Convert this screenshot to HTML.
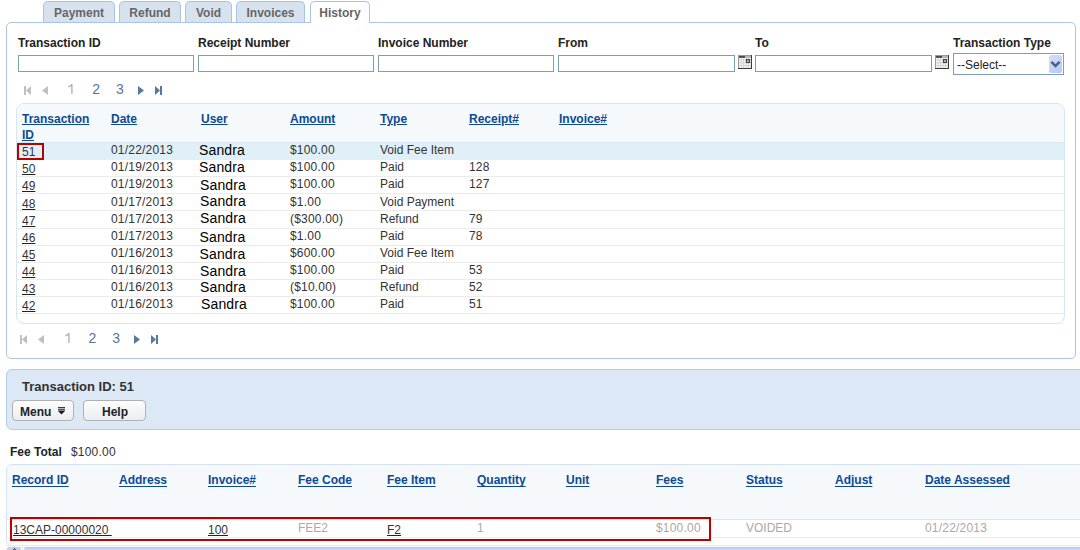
<!DOCTYPE html>
<html><head><meta charset="utf-8"><style>
html,body{margin:0;padding:0;background:#fff;width:1080px;height:550px;overflow:hidden;position:relative;font-family:"Liberation Sans", sans-serif;}
.t{position:absolute;white-space:nowrap;font-family:"Liberation Sans", sans-serif;}
.b{position:absolute;}
svg.b{position:absolute;}
</style></head><body>
<div class="b" style="left:43px;top:1px;width:72px;height:21px;background:#d7e2ef;border:1px solid #a8c4e4;border-bottom:none;border-radius:5px 5px 0 0;box-sizing:border-box;"></div>
<div class="b" style="left:119px;top:1px;width:62px;height:21px;background:#d7e2ef;border:1px solid #a8c4e4;border-bottom:none;border-radius:5px 5px 0 0;box-sizing:border-box;"></div>
<div class="b" style="left:185px;top:1px;width:47px;height:21px;background:#d7e2ef;border:1px solid #a8c4e4;border-bottom:none;border-radius:5px 5px 0 0;box-sizing:border-box;"></div>
<div class="b" style="left:236px;top:1px;width:69px;height:21px;background:#d7e2ef;border:1px solid #a8c4e4;border-bottom:none;border-radius:5px 5px 0 0;box-sizing:border-box;"></div>
<div class="b" style="left:310px;top:1px;width:60px;height:22px;background:#fff;border:1px solid #a8c4e4;border-bottom:none;border-radius:5px 5px 0 0;box-sizing:border-box;"></div>
<div class="b" style="left:6px;top:22px;width:1070px;height:337px;border:1px solid #a9c6e8;border-radius:5px;box-sizing:border-box;background:transparent;"></div>
<div class="b" style="left:311px;top:22px;width:58px;height:1px;background:#fff;"></div>
<div class="t" style="left:43px;top:6px;width:72px;text-align:center;font-size:12px;line-height:14px;font-weight:bold;color:#666;">Payment</div>
<div class="t" style="left:119px;top:6px;width:62px;text-align:center;font-size:12px;line-height:14px;font-weight:bold;color:#666;">Refund</div>
<div class="t" style="left:185px;top:6px;width:47px;text-align:center;font-size:12px;line-height:14px;font-weight:bold;color:#666;">Void</div>
<div class="t" style="left:236px;top:6px;width:69px;text-align:center;font-size:12px;line-height:14px;font-weight:bold;color:#666;">Invoices</div>
<div class="t" style="left:310px;top:6px;width:60px;text-align:center;font-size:12px;line-height:14px;font-weight:bold;color:#666;">History</div>
<div class="t" style="left:18px;top:36px;font-size:12px;line-height:14px;font-weight:bold;color:#222;">Transaction ID</div>
<div class="t" style="left:198px;top:36px;font-size:12px;line-height:14px;font-weight:bold;color:#222;">Receipt Number</div>
<div class="t" style="left:378px;top:36px;font-size:12px;line-height:14px;font-weight:bold;color:#222;">Invoice Number</div>
<div class="t" style="left:558px;top:36px;font-size:12px;line-height:14px;font-weight:bold;color:#222;">From</div>
<div class="t" style="left:755px;top:36px;font-size:12px;line-height:14px;font-weight:bold;color:#222;">To</div>
<div class="t" style="left:953px;top:36px;font-size:12px;line-height:14px;font-weight:bold;color:#222;">Transaction Type</div>
<div class="b" style="left:18px;top:55px;width:176px;height:17px;border:1px solid #7f9db9;box-sizing:border-box;background:#fff;"></div>
<div class="b" style="left:198px;top:55px;width:176px;height:17px;border:1px solid #7f9db9;box-sizing:border-box;background:#fff;"></div>
<div class="b" style="left:378px;top:55px;width:176px;height:17px;border:1px solid #7f9db9;box-sizing:border-box;background:#fff;"></div>
<div class="b" style="left:558px;top:55px;width:177px;height:17px;border:1px solid #7f9db9;box-sizing:border-box;background:#fff;"></div>
<div class="b" style="left:755px;top:55px;width:177px;height:17px;border:1px solid #7f9db9;box-sizing:border-box;background:#fff;"></div>
<div class="b" style="left:738px;top:55px;width:14px;height:14px;"><svg width="14" height="14" viewBox="0 0 14 14">
<rect x="0" y="0" width="14" height="14" fill="#9a9a9a"/>
<rect x="1" y="1" width="12" height="2" fill="#b4b4b4"/>
<rect x="1" y="1" width="6" height="2" fill="#4a4a4a"/>
<rect x="1" y="3" width="12" height="10" fill="#d2d2d2"/>
<g fill="#fbfbfb"><rect x="1.10" y="2.85" width="1.6" height="1.6"/><rect x="1.10" y="5.60" width="1.6" height="1.6"/><rect x="1.10" y="8.35" width="1.6" height="1.6"/><rect x="1.10" y="11.10" width="1.6" height="1.6"/><rect x="3.57" y="2.85" width="1.6" height="1.6"/><rect x="3.57" y="5.60" width="1.6" height="1.6"/><rect x="3.57" y="8.35" width="1.6" height="1.6"/><rect x="3.57" y="11.10" width="1.6" height="1.6"/><rect x="6.04" y="2.85" width="1.6" height="1.6"/><rect x="6.04" y="5.60" width="1.6" height="1.6"/><rect x="6.04" y="8.35" width="1.6" height="1.6"/><rect x="6.04" y="11.10" width="1.6" height="1.6"/><rect x="8.51" y="2.85" width="1.6" height="1.6"/><rect x="8.51" y="5.60" width="1.6" height="1.6"/><rect x="8.51" y="8.35" width="1.6" height="1.6"/><rect x="8.51" y="11.10" width="1.6" height="1.6"/><rect x="10.98" y="2.85" width="1.6" height="1.6"/><rect x="10.98" y="5.60" width="1.6" height="1.6"/><rect x="10.98" y="8.35" width="1.6" height="1.6"/><rect x="10.98" y="11.10" width="1.6" height="1.6"/></g>
<rect x="8.6" y="4.6" width="2.8" height="2.8" fill="#fff" stroke="#444" stroke-width="1.3"/>
<rect x="13" y="0" width="1" height="14" fill="#3c3c3c"/><rect x="0" y="13" width="14" height="1" fill="#3c3c3c"/>
</svg></div>
<div class="b" style="left:935px;top:55px;width:14px;height:14px;"><svg width="14" height="14" viewBox="0 0 14 14">
<rect x="0" y="0" width="14" height="14" fill="#9a9a9a"/>
<rect x="1" y="1" width="12" height="2" fill="#b4b4b4"/>
<rect x="1" y="1" width="6" height="2" fill="#4a4a4a"/>
<rect x="1" y="3" width="12" height="10" fill="#d2d2d2"/>
<g fill="#fbfbfb"><rect x="1.10" y="2.85" width="1.6" height="1.6"/><rect x="1.10" y="5.60" width="1.6" height="1.6"/><rect x="1.10" y="8.35" width="1.6" height="1.6"/><rect x="1.10" y="11.10" width="1.6" height="1.6"/><rect x="3.57" y="2.85" width="1.6" height="1.6"/><rect x="3.57" y="5.60" width="1.6" height="1.6"/><rect x="3.57" y="8.35" width="1.6" height="1.6"/><rect x="3.57" y="11.10" width="1.6" height="1.6"/><rect x="6.04" y="2.85" width="1.6" height="1.6"/><rect x="6.04" y="5.60" width="1.6" height="1.6"/><rect x="6.04" y="8.35" width="1.6" height="1.6"/><rect x="6.04" y="11.10" width="1.6" height="1.6"/><rect x="8.51" y="2.85" width="1.6" height="1.6"/><rect x="8.51" y="5.60" width="1.6" height="1.6"/><rect x="8.51" y="8.35" width="1.6" height="1.6"/><rect x="8.51" y="11.10" width="1.6" height="1.6"/><rect x="10.98" y="2.85" width="1.6" height="1.6"/><rect x="10.98" y="5.60" width="1.6" height="1.6"/><rect x="10.98" y="8.35" width="1.6" height="1.6"/><rect x="10.98" y="11.10" width="1.6" height="1.6"/></g>
<rect x="8.6" y="4.6" width="2.8" height="2.8" fill="#fff" stroke="#444" stroke-width="1.3"/>
<rect x="13" y="0" width="1" height="14" fill="#3c3c3c"/><rect x="0" y="13" width="14" height="1" fill="#3c3c3c"/>
</svg></div>
<div class="b" style="left:953px;top:53px;width:111px;height:22px;border:1px solid #7f9db9;box-sizing:border-box;background:#fff;"></div>
<div class="t" style="left:957px;top:58px;font-size:12px;line-height:14px;color:#222;">--Select--</div>
<div class="b" style="left:1049px;top:55px;width:13px;height:18px;border-radius:2px;background:linear-gradient(135deg,#d3dffc,#b4c8f7);">
<svg width="13" height="18" viewBox="0 0 13 18"><path d="M2.4 6.9 L6.5 11 L10.6 6.9" fill="none" stroke="#4d6185" stroke-width="2.6"/></svg></div>
<svg class="b" style="left:24px;top:86px" width="150" height="10" viewBox="0 0 150 10">
<rect x="0" y="0" width="2" height="9" fill="#c0c0c0"/><path d="M2 4.5 L7 0 L7 9 Z" fill="#c0c0c0"/>
<path d="M18 4.5 L24 0 L24 9 Z" fill="#c0c0c0"/>
<path d="M114 0 L120 4.5 L114 9 Z" fill="#5878a0"/>
<path d="M131 0 L136 4.5 L131 9 Z" fill="#5878a0"/><rect x="136" y="0" width="2" height="9" fill="#5878a0"/>
</svg>
<svg class="b" style="left:68.3px;top:84px" width="6" height="10" viewBox="0 0 6 10"><path d="M3.2 0 L4.6 0 L4.6 10 L3.2 10 L3.2 2.2 Q2 3.2 0.2 3.6 L0.2 2.3 Q2.2 1.5 3.2 0 Z" fill="#b4b4b4"/></svg>
<div class="t" style="left:92.2px;top:81px;font-size:14px;line-height:16px;color:#5676a2;">2</div>
<div class="t" style="left:116px;top:81px;font-size:14px;line-height:16px;color:#5676a2;">3</div>
<div class="b" style="left:16px;top:103px;width:1049px;height:221px;border:1px solid #d6e6f3;border-radius:8px;box-sizing:border-box;background:#fff;overflow:hidden;"></div>
<div class="b" style="left:17px;top:104px;width:1047px;height:38px;background:#f5f9fc;border-radius:7px 7px 0 0;"></div>
<div class="b" style="left:17px;top:142px;width:1047px;height:1px;background:#dbe7f3;"></div>
<div class="b" style="left:17px;top:143px;width:1047px;height:16px;background:#e0f0f9;"></div>
<div class="b" style="left:17px;top:159px;width:1047px;height:1px;background:#ececec;"></div>
<div class="b" style="left:17px;top:176px;width:1047px;height:1px;background:#ececec;"></div>
<div class="b" style="left:17px;top:193px;width:1047px;height:1px;background:#ececec;"></div>
<div class="b" style="left:17px;top:210px;width:1047px;height:1px;background:#ececec;"></div>
<div class="b" style="left:17px;top:228px;width:1047px;height:1px;background:#ececec;"></div>
<div class="b" style="left:17px;top:245px;width:1047px;height:1px;background:#ececec;"></div>
<div class="b" style="left:17px;top:262px;width:1047px;height:1px;background:#ececec;"></div>
<div class="b" style="left:17px;top:279px;width:1047px;height:1px;background:#ececec;"></div>
<div class="b" style="left:17px;top:296px;width:1047px;height:1px;background:#ececec;"></div>
<div class="b" style="left:17px;top:313px;width:1047px;height:1px;background:#ececec;"></div>
<div class="t" style="left:22px;top:112px;font-size:12px;line-height:14px;font-weight:bold;color:#0c4a96;text-decoration:underline;">Transaction</div>
<div class="t" style="left:22px;top:128px;font-size:12px;line-height:14px;font-weight:bold;color:#0c4a96;text-decoration:underline;">ID</div>
<div class="t" style="left:111px;top:112px;font-size:12px;line-height:14px;font-weight:bold;color:#0c4a96;text-decoration:underline;">Date</div>
<div class="t" style="left:201px;top:112px;font-size:12px;line-height:14px;font-weight:bold;color:#0c4a96;text-decoration:underline;">User</div>
<div class="t" style="left:290px;top:112px;font-size:12px;line-height:14px;font-weight:bold;color:#0c4a96;text-decoration:underline;">Amount</div>
<div class="t" style="left:380px;top:112px;font-size:12px;line-height:14px;font-weight:bold;color:#0c4a96;text-decoration:underline;">Type</div>
<div class="t" style="left:469px;top:112px;font-size:12px;line-height:14px;font-weight:bold;color:#0c4a96;text-decoration:underline;">Receipt#</div>
<div class="t" style="left:559px;top:112px;font-size:12px;line-height:14px;font-weight:bold;color:#0c4a96;text-decoration:underline;">Invoice#</div>
<div class="t" style="left:22px;top:145px;font-size:12px;line-height:14px;color:#333;">51</div>
<div class="t" style="left:111px;top:143px;font-size:12px;line-height:14px;color:#333;letter-spacing:0.2px;">01/22/2013</div>
<div class="t" style="left:199px;top:142px;font-size:14px;line-height:16px;color:#000;letter-spacing:0.15px;">Sandra</div>
<div class="t" style="left:290px;top:143px;font-size:12px;line-height:14px;color:#333;letter-spacing:0.2px;">$100.00</div>
<div class="t" style="left:380px;top:143px;font-size:12px;line-height:14px;color:#333;">Void Fee Item</div>
<div class="t" style="left:22px;top:162px;font-size:12px;line-height:14px;color:#333;text-decoration:underline;text-decoration-color:#222;">50</div>
<div class="t" style="left:111px;top:160px;font-size:12px;line-height:14px;color:#333;letter-spacing:0.2px;">01/19/2013</div>
<div class="t" style="left:199px;top:159px;font-size:14px;line-height:16px;color:#000;letter-spacing:0.15px;">Sandra</div>
<div class="t" style="left:290px;top:160px;font-size:12px;line-height:14px;color:#333;letter-spacing:0.2px;">$100.00</div>
<div class="t" style="left:380px;top:160px;font-size:12px;line-height:14px;color:#333;">Paid</div>
<div class="t" style="left:469px;top:160px;font-size:12px;line-height:14px;color:#333;letter-spacing:0.2px;">128</div>
<div class="t" style="left:22px;top:179px;font-size:12px;line-height:14px;color:#333;text-decoration:underline;text-decoration-color:#222;">49</div>
<div class="t" style="left:111px;top:177px;font-size:12px;line-height:14px;color:#333;letter-spacing:0.2px;">01/19/2013</div>
<div class="t" style="left:200px;top:177px;font-size:14px;line-height:16px;color:#000;letter-spacing:0.15px;">Sandra</div>
<div class="t" style="left:290px;top:177px;font-size:12px;line-height:14px;color:#333;letter-spacing:0.2px;">$100.00</div>
<div class="t" style="left:380px;top:177px;font-size:12px;line-height:14px;color:#333;">Paid</div>
<div class="t" style="left:469px;top:177px;font-size:12px;line-height:14px;color:#333;letter-spacing:0.2px;">127</div>
<div class="t" style="left:22px;top:197px;font-size:12px;line-height:14px;color:#333;text-decoration:underline;text-decoration-color:#222;">48</div>
<div class="t" style="left:111px;top:195px;font-size:12px;line-height:14px;color:#333;letter-spacing:0.2px;">01/17/2013</div>
<div class="t" style="left:200px;top:193px;font-size:14px;line-height:16px;color:#000;letter-spacing:0.15px;">Sandra</div>
<div class="t" style="left:290px;top:195px;font-size:12px;line-height:14px;color:#333;letter-spacing:0.2px;">$1.00</div>
<div class="t" style="left:380px;top:195px;font-size:12px;line-height:14px;color:#333;">Void Payment</div>
<div class="t" style="left:22px;top:214px;font-size:12px;line-height:14px;color:#333;text-decoration:underline;text-decoration-color:#222;">47</div>
<div class="t" style="left:111px;top:212px;font-size:12px;line-height:14px;color:#333;letter-spacing:0.2px;">01/17/2013</div>
<div class="t" style="left:200px;top:210px;font-size:14px;line-height:16px;color:#000;letter-spacing:0.15px;">Sandra</div>
<div class="t" style="left:290px;top:212px;font-size:12px;line-height:14px;color:#333;letter-spacing:0.2px;">($300.00)</div>
<div class="t" style="left:380px;top:212px;font-size:12px;line-height:14px;color:#333;">Refund</div>
<div class="t" style="left:469px;top:212px;font-size:12px;line-height:14px;color:#333;letter-spacing:0.2px;">79</div>
<div class="t" style="left:22px;top:231px;font-size:12px;line-height:14px;color:#333;text-decoration:underline;text-decoration-color:#222;">46</div>
<div class="t" style="left:111px;top:229px;font-size:12px;line-height:14px;color:#333;letter-spacing:0.2px;">01/17/2013</div>
<div class="t" style="left:199.5px;top:229px;font-size:14px;line-height:16px;color:#000;letter-spacing:0.15px;">Sandra</div>
<div class="t" style="left:290px;top:229px;font-size:12px;line-height:14px;color:#333;letter-spacing:0.2px;">$1.00</div>
<div class="t" style="left:380px;top:229px;font-size:12px;line-height:14px;color:#333;">Paid</div>
<div class="t" style="left:469px;top:229px;font-size:12px;line-height:14px;color:#333;letter-spacing:0.2px;">78</div>
<div class="t" style="left:22px;top:248px;font-size:12px;line-height:14px;color:#333;text-decoration:underline;text-decoration-color:#222;">45</div>
<div class="t" style="left:111px;top:246px;font-size:12px;line-height:14px;color:#333;letter-spacing:0.2px;">01/16/2013</div>
<div class="t" style="left:199.5px;top:246px;font-size:14px;line-height:16px;color:#000;letter-spacing:0.15px;">Sandra</div>
<div class="t" style="left:290px;top:246px;font-size:12px;line-height:14px;color:#333;letter-spacing:0.2px;">$600.00</div>
<div class="t" style="left:380px;top:246px;font-size:12px;line-height:14px;color:#333;">Void Fee Item</div>
<div class="t" style="left:22px;top:265px;font-size:12px;line-height:14px;color:#333;text-decoration:underline;text-decoration-color:#222;">44</div>
<div class="t" style="left:111px;top:263px;font-size:12px;line-height:14px;color:#333;letter-spacing:0.2px;">01/16/2013</div>
<div class="t" style="left:200px;top:263px;font-size:14px;line-height:16px;color:#000;letter-spacing:0.15px;">Sandra</div>
<div class="t" style="left:290px;top:263px;font-size:12px;line-height:14px;color:#333;letter-spacing:0.2px;">$100.00</div>
<div class="t" style="left:380px;top:263px;font-size:12px;line-height:14px;color:#333;">Paid</div>
<div class="t" style="left:469px;top:263px;font-size:12px;line-height:14px;color:#333;letter-spacing:0.2px;">53</div>
<div class="t" style="left:22px;top:282px;font-size:12px;line-height:14px;color:#333;text-decoration:underline;text-decoration-color:#222;">43</div>
<div class="t" style="left:111px;top:280px;font-size:12px;line-height:14px;color:#333;letter-spacing:0.2px;">01/16/2013</div>
<div class="t" style="left:200px;top:279px;font-size:14px;line-height:16px;color:#000;letter-spacing:0.15px;">Sandra</div>
<div class="t" style="left:290px;top:280px;font-size:12px;line-height:14px;color:#333;letter-spacing:0.2px;">($10.00)</div>
<div class="t" style="left:380px;top:280px;font-size:12px;line-height:14px;color:#333;">Refund</div>
<div class="t" style="left:469px;top:280px;font-size:12px;line-height:14px;color:#333;letter-spacing:0.2px;">52</div>
<div class="t" style="left:22px;top:299px;font-size:12px;line-height:14px;color:#333;text-decoration:underline;text-decoration-color:#222;">42</div>
<div class="t" style="left:111px;top:297px;font-size:12px;line-height:14px;color:#333;letter-spacing:0.2px;">01/16/2013</div>
<div class="t" style="left:201px;top:296px;font-size:14px;line-height:16px;color:#000;letter-spacing:0.15px;">Sandra</div>
<div class="t" style="left:290px;top:297px;font-size:12px;line-height:14px;color:#333;letter-spacing:0.2px;">$100.00</div>
<div class="t" style="left:380px;top:297px;font-size:12px;line-height:14px;color:#333;">Paid</div>
<div class="t" style="left:469px;top:297px;font-size:12px;line-height:14px;color:#333;letter-spacing:0.2px;">51</div>
<div class="b" style="left:17px;top:143px;width:27px;height:17px;border:2px solid #bb0000;box-sizing:border-box;"></div>
<svg class="b" style="left:20.3px;top:335px" width="150" height="10" viewBox="0 0 150 10">
<rect x="0" y="0" width="2" height="9" fill="#c0c0c0"/><path d="M2 4.5 L7 0 L7 9 Z" fill="#c0c0c0"/>
<path d="M18 4.5 L24 0 L24 9 Z" fill="#c0c0c0"/>
<path d="M114 0 L120 4.5 L114 9 Z" fill="#5878a0"/>
<path d="M131 0 L136 4.5 L131 9 Z" fill="#5878a0"/><rect x="136" y="0" width="2" height="9" fill="#5878a0"/>
</svg>
<svg class="b" style="left:64.6px;top:333px" width="6" height="10" viewBox="0 0 6 10"><path d="M3.2 0 L4.6 0 L4.6 10 L3.2 10 L3.2 2.2 Q2 3.2 0.2 3.6 L0.2 2.3 Q2.2 1.5 3.2 0 Z" fill="#b4b4b4"/></svg>
<div class="t" style="left:88.5px;top:330px;font-size:14px;line-height:16px;color:#5676a2;">2</div>
<div class="t" style="left:112.3px;top:330px;font-size:14px;line-height:16px;color:#5676a2;">3</div>
<div class="b" style="left:6px;top:369px;width:1090px;height:61px;background:#dce8f5;border:1px solid #b3cce8;border-radius:6px;box-sizing:border-box;"></div>
<div class="t" style="left:22px;top:379px;font-size:13px;line-height:15px;font-weight:bold;color:#333;">Transaction ID: 51</div>
<div class="b" style="left:12px;top:400px;width:62px;height:21px;border:1px solid #b0b0b0;border-radius:4px;box-sizing:border-box;background:linear-gradient(#fdfdfd,#e9edf2);"></div>
<div class="b" style="left:83px;top:400px;width:63px;height:21px;border:1px solid #b0b0b0;border-radius:4px;box-sizing:border-box;background:linear-gradient(#fdfdfd,#e9edf2);"></div>
<div class="t" style="left:20px;top:405px;font-size:12px;line-height:14px;font-weight:bold;color:#222;">Menu</div>
<svg class="b" style="left:58px;top:407px" width="8" height="8" viewBox="0 0 8 8">
<rect x="0" y="0" width="7" height="1" fill="#3a3a3a"/><rect x="0" y="1" width="7" height="1" fill="#b8b8b8"/><rect x="0" y="2" width="7" height="1" fill="#555"/><rect x="0" y="3" width="7" height="1" fill="#8a8a8a"/>
<path d="M0 4 L7 4 L3.5 7.5 Z" fill="#1a1a1a"/></svg>
<div class="t" style="left:102px;top:405px;font-size:12px;line-height:14px;font-weight:bold;color:#222;">Help</div>
<div class="t" style="left:10px;top:445px;font-size:12px;line-height:14px;font-weight:bold;color:#222;">Fee Total</div>
<div class="t" style="left:71px;top:445px;font-size:12px;line-height:14px;color:#333;letter-spacing:0.2px;">$100.00</div>
<div class="b" style="left:6px;top:464px;width:1090px;height:82px;border:1px solid #d4e2f1;border-radius:6px;box-sizing:border-box;background:#fff;overflow:hidden;"></div>
<div class="b" style="left:7px;top:465px;width:1080px;height:54px;background:#f5f9fc;border-radius:5px 0 0 0;"></div>
<div class="b" style="left:7px;top:519px;width:1080px;height:1px;background:#dbe7f3;"></div>
<div class="b" style="left:7px;top:537px;width:1080px;height:1px;background:#ebebeb;"></div>
<div class="t" style="left:12px;top:473px;font-size:12px;line-height:14px;font-weight:bold;color:#0c4a96;text-decoration:underline;text-underline-offset:2px;">Record ID</div>
<div class="t" style="left:119px;top:473px;font-size:12px;line-height:14px;font-weight:bold;color:#0c4a96;text-decoration:underline;text-underline-offset:2px;">Address</div>
<div class="t" style="left:208px;top:473px;font-size:12px;line-height:14px;font-weight:bold;color:#0c4a96;text-decoration:underline;text-underline-offset:2px;">Invoice#</div>
<div class="t" style="left:298px;top:473px;font-size:12px;line-height:14px;font-weight:bold;color:#0c4a96;text-decoration:underline;text-underline-offset:2px;">Fee Code</div>
<div class="t" style="left:387px;top:473px;font-size:12px;line-height:14px;font-weight:bold;color:#0c4a96;text-decoration:underline;text-underline-offset:2px;">Fee Item</div>
<div class="t" style="left:477px;top:473px;font-size:12px;line-height:14px;font-weight:bold;color:#0c4a96;text-decoration:underline;text-underline-offset:2px;">Quantity</div>
<div class="t" style="left:566px;top:473px;font-size:12px;line-height:14px;font-weight:bold;color:#0c4a96;text-decoration:underline;text-underline-offset:2px;">Unit</div>
<div class="t" style="left:656px;top:473px;font-size:12px;line-height:14px;font-weight:bold;color:#0c4a96;text-decoration:underline;text-underline-offset:2px;">Fees</div>
<div class="t" style="left:746px;top:473px;font-size:12px;line-height:14px;font-weight:bold;color:#0c4a96;text-decoration:underline;text-underline-offset:2px;">Status</div>
<div class="t" style="left:835px;top:473px;font-size:12px;line-height:14px;font-weight:bold;color:#0c4a96;text-decoration:underline;text-underline-offset:2px;">Adjust</div>
<div class="t" style="left:925px;top:473px;font-size:12px;line-height:14px;font-weight:bold;color:#0c4a96;text-decoration:underline;text-underline-offset:2px;">Date Assessed</div>
<div class="t" style="left:13px;top:523px;font-size:12px;line-height:14px;color:#333;text-decoration:underline;text-decoration-color:#222;">13CAP-00000020&nbsp;</div>
<div class="t" style="left:208px;top:523px;font-size:12px;line-height:14px;color:#333;text-decoration:underline;text-decoration-color:#222;">100</div>
<div class="t" style="left:387px;top:523px;font-size:12px;line-height:14px;color:#333;text-decoration:underline;text-decoration-color:#222;">F2</div>
<div class="t" style="left:298px;top:521px;font-size:12px;line-height:14px;color:#a9a9a9;">FEE2</div>
<div class="t" style="left:477px;top:521px;font-size:12px;line-height:14px;color:#a9a9a9;letter-spacing:0.2px;">1</div>
<div class="t" style="left:656px;top:521px;font-size:12px;line-height:14px;color:#a9a9a9;letter-spacing:0.2px;">$100.00</div>
<div class="t" style="left:746px;top:521px;font-size:12px;line-height:14px;color:#a9a9a9;">VOIDED</div>
<div class="t" style="left:925px;top:521px;font-size:12px;line-height:14px;color:#a9a9a9;letter-spacing:0.2px;">01/22/2013</div>
<div class="b" style="left:10px;top:517px;width:701px;height:24px;border:2px solid #bb0000;box-sizing:border-box;"></div>
<div class="b" style="left:0px;top:545px;width:6px;height:1px;background:#fff;"></div>
<div class="b" style="left:6px;top:545px;width:1074px;height:1px;background:#ecebe0;"></div>
<div class="b" style="left:6px;top:546px;width:1074px;height:4px;background:#fdfdfb;"></div>
<div class="b" style="left:22px;top:546px;width:1px;height:4px;background:#eeede5;"></div>
<div class="b" style="left:7px;top:547px;width:14px;height:3px;background:linear-gradient(#b9cbf5,#c8d6f8);border-radius:2px 2px 0 0;"></div>
<div class="b" style="left:14px;top:548px;width:1px;height:2px;background:#4d6185;"></div>
<div class="b" style="left:13px;top:549px;width:3px;height:1px;background:#4d6185;"></div>
<div class="b" style="left:24px;top:547px;width:1056px;height:3px;background:linear-gradient(#b2c5f2 0,#b2c5f2 1px,#c6d4f7 1px);border-radius:2px 0 0 0;"></div>
</body></html>
